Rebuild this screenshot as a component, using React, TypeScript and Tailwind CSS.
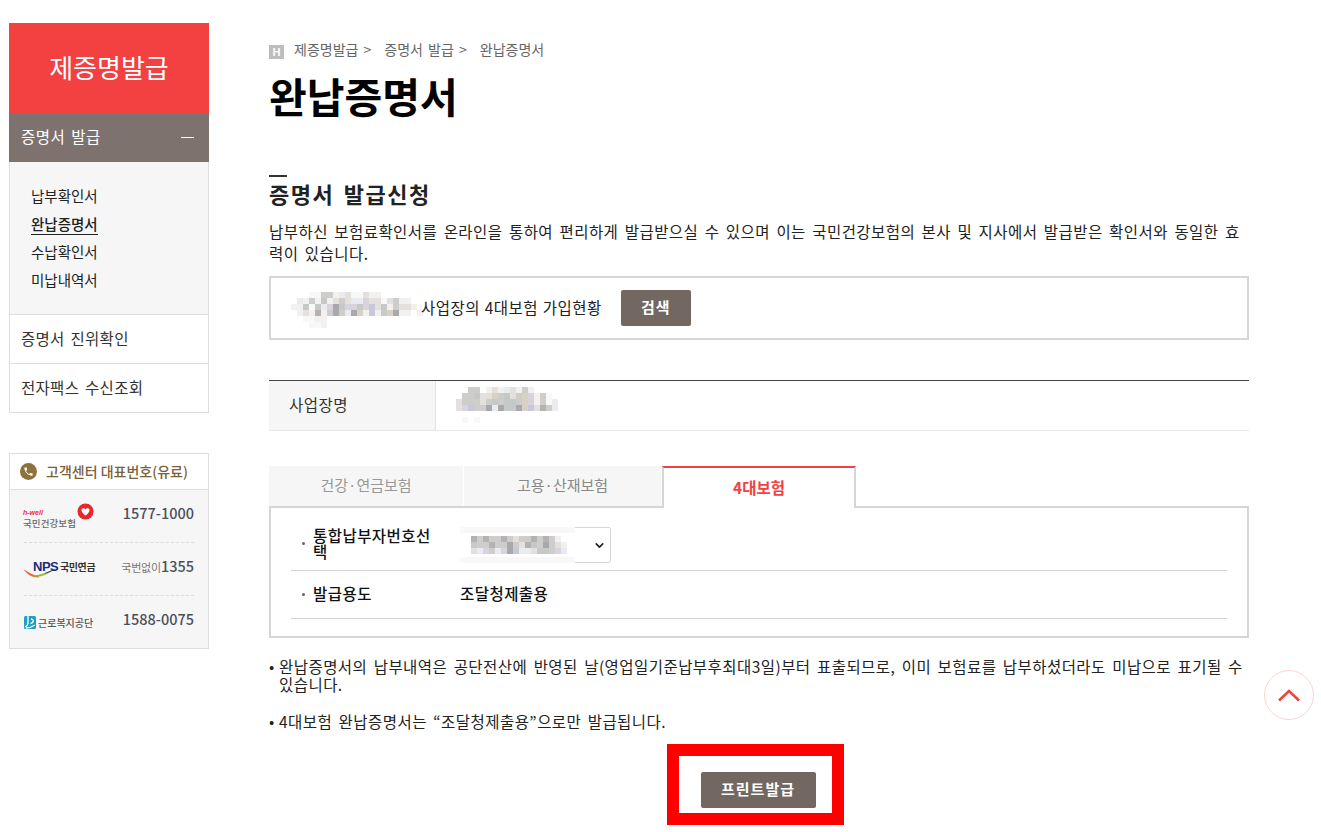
import React from "react";
import { ChevronDown } from "lucide-react";

// pixelated patch standing in for the blurred-out values
function Mosaic({ rows, cell = 6, className = "" }: { rows: string[][]; cell?: number; className?: string }) {
    const w = Math.max(...rows.map(r => r.length)) * cell;
    return (
        <svg width={w} height={rows.length * cell} className={className}>
            {rows.map((r, y) =>
                r.map((c, x) => (c ? <rect key={`${x}-${y}`} x={x * cell} y={y * cell} width={cell} height={cell} fill={c} /> : null))
            )}
        </svg>
    );
}

const a = "#f3f1ef", b = "#e3e0de", c = "#cfcdcb", d = "#b5b3b2", e = "#e9ebf0", f = "#d9d3dd", g = "#c5c9c8", h = "#d8d2c4", i = "#c8c8dc", j = "#a9a9ad", k = "#f8f8f8";

const nameRows = [
    ["", "", "", k, k, c, c, a, e, b, k, k, b, a, a, "", "", "", "", "", "", "", ""],
    ["", e, a, c, a, g, a, b, c, b, e, e, f, b, b, k, b, c, a, a, "", "", ""],
    [a, a, g, k, g, e, f, j, g, f, f, g, f, i, b, g, a, c, b, b, a, "", ""],
    ["", a, b, a, d, a, c, j, c, e, j, h, a, i, a, g, h, j, a, a, "", a, ""],
    ["", "", k, k, a, a, "", "", "", "", "", "", "", "", "", "", "", "", "", "", "", "", ""],
    ["", "", "", k, k, a, "", "", "", "", "", "", "", "", "", "", "", "", "", "", "", "", ""],
];
const bizRows = [
    ["", "", c, c, "", a, b, a, e, b, a, c, a, "", "", "", ""],
    ["", c, c, g, b, b, h, c, g, b, c, h, f, a, c, k, ""],
    [b, c, c, c, b, c, g, c, g, g, c, h, f, a, c, k, e],
    [b, f, i, c, c, j, e, j, g, g, j, h, i, b, d, c, e],
    ["", "", "", "", "", "", "", "", "", "", "", "", "", "", "", "", ""],
    ["", k, "", k, "", "", "", "", "", "", "", "", "", "", "", "", ""],
];
const selRows = [
    [d, c, d, c, c, d, c, b, c, c, d, c, d, c, a, ""],
    [g, c, c, d, c, c, j, c, b, d, g, c, j, c, b, a],
    [b, e, f, c, e, f, j, i, e, e, b, g, g, c, f, e],
];

function HealthLogo() {
    return (
        <div className="relative w-[72px] h-[30px]">
            <span className="absolute left-[-1px] top-[8px] text-[7px] leading-[7px] italic font-bold text-[#e8303a] font-['Liberation_Sans',sans-serif]">h-well</span>
            <span className="absolute left-[-1px] top-[17px] text-[9.5px] leading-[11px] tracking-[0.1px] text-[#666]">국민건강보험</span>
            <svg width="17" height="17" viewBox="0 0 17 17" className="absolute left-[53px] top-[2px]">
                <circle cx="8.5" cy="8.5" r="8" fill="#e8262d" />
                <path d="M8.5 12.5C6 10.5 4.5 9 4.5 7.2 4.5 5 7.5 4.5 8.5 6.5 9.5 4.5 12.5 5 12.5 7.2 12.5 9 11 10.5 8.5 12.5Z" fill="#fff" />
            </svg>
        </div>
    );
}

function NpsLogo() {
    return (
        <div className="relative w-[72px] h-[20px]">
            <span className="absolute left-[9px] top-[1px] text-[13px] leading-[13px] font-bold tracking-[-0.5px] text-[#1c2a7a] font-['Liberation_Sans',sans-serif]">NPS</span>
            <span className="absolute left-[36px] top-[1px] text-[10px] leading-[13px] font-bold tracking-[-0.4px] text-[#333]">국민연금</span>
            <svg width="34" height="10" viewBox="0 0 34 10" className="absolute left-0 top-[9px]">
                <path d="M0.5 2C4 7 9 9.5 15 9 10 7.5 5 5.500 0.5 2Z" fill="#e8622a" stroke="#e8622a" strokeWidth="0.6" />
                <path d="M9 8C16 9 22 7 27 3 22 5 16 7.5 9 8Z" fill="#8fb52a" stroke="#8fb52a" strokeWidth="0.6" />
                <path d="M20 5.5C24 5 28 3.5 32 0.5 28 2 24 4 20 5.5Z" fill="#1c2a7a" />
            </svg>
        </div>
    );
}

function WorkLogo() {
    return (
        <div className="flex items-center gap-[2px] h-[16px]">
            <svg width="12" height="13" viewBox="0 0 12 13">
                <rect width="12" height="13" rx="1.5" fill="#1e9fc4" />
                <path d="M4 0V7C4 9 3 10 1 11M7 3C10 3 10 7 6.5 7.5M2 12C5 12 8 11 11 9" stroke="#fff" strokeWidth="1.3" fill="none" />
            </svg>
            <span className="text-[10px] leading-[13px] text-[#555]">근로복지공단</span>
        </div>
    );
}

export default function App() {
    return (
        <div className="relative h-[832px] overflow-hidden bg-white font-['Noto_Sans_CJK_KR','Noto_Sans',sans-serif] text-[14px] text-[#111]">
            <div className="flex items-start pl-[9px] pt-[23px]">
                {/* left nav */}
                <aside className="w-[200px] shrink-0">
                    <div className="h-[91px] bg-[#f34141] flex items-center justify-center pb-[3px] text-[26px] leading-[30px] text-white">제증명발급</div>
                    <div className="h-[48px] bg-[#7e726f] flex items-center justify-between pl-[12px] pr-[15px] pb-[2px] text-[15.5px] tracking-[0.5px] [word-spacing:2px] text-white">
                        <span>증명서 발급</span>
                        <span className="block w-[13px] h-[1px] bg-white" />
                    </div>
                    <div className="border-x border-b border-[#dedede]">
                        <ul className="h-[153px] bg-[#f6f6f6] border-b border-[#dedede] pt-[20px] pl-[21px] text-[14.5px] leading-[28px] text-[#222]">
                            <li>납부확인서</li>
                            <li><span className="border-b border-[#222] font-medium">완납증명서</span></li>
                            <li>수납확인서</li>
                            <li>미납내역서</li>
                        </ul>
                        <div className="h-[49px] border-b border-[#dedede] flex items-center pl-[11px] text-[15.5px] tracking-[0.3px] [word-spacing:2px] text-[#333]">증명서 진위확인</div>
                        <div className="h-[48px] flex items-center pl-[11px] text-[15.5px] tracking-[0.3px] [word-spacing:2px] text-[#333]">전자팩스 수신조회</div>
                    </div>

                    <div className="mt-[40px] border border-[#dedede] bg-[#f6f6f6]">
                        <div className="h-[36px] bg-white border-b border-[#dedede] flex items-center pl-[10px] gap-[9px] text-[14px] font-medium text-[#7a6238]">
                            <span className="w-[17px] h-[17px] rounded-full bg-[#8f713a] flex items-center justify-center">
                                <svg width="11" height="11" viewBox="0 0 24 24" fill="#fff">
                                    <path d="M6.6 10.8c1.4 2.8 3.8 5.100 6.600 6.600l2.200-2.200c.3-.3.7-.4 1-.2 1.100.4 2.300.6 3.600.6.600 0 1 .4 1 1V20c0 .6-.4 1-1 1C10.600 21 3 13.400 3 4c0-.6.4-1 1-1h3.500c.6 0 1 .4 1 1 0 1.300.2 2.500.6 3.600.1.300 0 .7-.2 1l-2.300 2.200z" />
                                </svg>
                            </span>
                            고객센터 대표번호(유료)
                        </div>
                        <div className="px-[14px]">
                            <div className="h-[53px] border-b border-dashed border-[#dcdcdc] flex items-center justify-between text-[14.5px] font-medium text-[#4a4f5c]">
                                <HealthLogo />
                                <span className="mb-[6px]">1577-1000</span>
                            </div>
                            <div className="h-[53px] border-b border-dashed border-[#dcdcdc] flex items-center justify-between text-[14.5px] font-medium text-[#4a4f5c]">
                                <NpsLogo />
                                <span className="flex items-baseline mb-[6px]">
                                    <span className="text-[11px] font-normal tracking-[-0.2px] text-[#777]">국번없이</span>1355
                                </span>
                            </div>
                            <div className="h-[52px] flex items-center justify-between text-[14.5px] font-medium text-[#4a4f5c]">
                                <WorkLogo />
                                <span className="mb-[6px]">1588-0075</span>
                            </div>
                        </div>
                    </div>
                </aside>

                {/* content */}
                <main className="ml-[60px] w-[980px] shrink-0">
                    <div className="flex items-center h-[20px] mt-[16px] text-[14px] [word-spacing:2px] text-[#666]">
                        <span className="w-[15px] h-[14px] mt-[5px] bg-[#bdbdbd] flex items-center justify-center text-[11px] leading-[14px] font-bold text-white font-['Liberation_Sans',sans-serif]">H</span>
                        <span className="ml-[10px]">제증명발급 &gt;</span>
                        <span className="ml-[13px]">증명서 발급 &gt;</span>
                        <span className="ml-[13px]">완납증명서</span>
                    </div>
                    <h1 className="mt-[7px] h-[58px] text-[41px] leading-[58px] font-bold text-black">완납증명서</h1>

                    <div className="mt-[51px] w-[18px] h-[1.5px] bg-[#333]" />
                    <h2 className="-mt-[2px] h-[37px] text-[22px] leading-[37px] font-bold text-[#222] tracking-[1.5px] [word-spacing:3px]">증명서 발급신청</h2>
                    <p className="mt-[8px] text-[15.5px] leading-[22px] text-[#222] tracking-[0.45px] [word-spacing:2.5px]">
                        납부하신 보험료확인서를 온라인을 통하여 편리하게 발급받으실 수 있으며 이는 국민건강보험의 본사 및 지사에서 발급받은 확인서와 동일한 효력이 있습니다.
                    </p>

                    <div className="mt-[12px] h-[64px] border-2 border-[#d6d6d6] flex items-center pl-[20px]">
                        <Mosaic rows={nameRows} className="mt-[4px]" />
                        <span className="-ml-[8px] text-[15.5px] tracking-[0.45px] [word-spacing:1px] text-[#222]">사업장의 4대보험 가입현황</span>
                        <button className="ml-[19px] w-[70px] h-[36px] rounded-[2px] bg-[#736762] text-white text-[15px] tracking-[1px] font-bold">검색</button>
                    </div>

                    <div className="mt-[40px] border-t border-[#444] flex h-[51px]">
                        <div className="w-[167px] bg-[#f6f6f6] border-r border-b border-r-[#e4e4e4] border-b-[#e8e8e8] flex items-center pl-[20px] text-[15.5px] tracking-[0.45px] text-[#333]">사업장명</div>
                        <div className="flex-1 border-b border-[#e8e8e8] flex items-center pl-[20px]">
                            <Mosaic rows={bizRows} />
                        </div>
                    </div>

                    <div className="mt-[35px] flex h-[41px] relative z-10">
                        <div className="w-[194px] h-[40px] bg-[#f6f6f6] flex items-center justify-center text-[15px] text-[#999]">건강·연금보험</div>
                        <div className="ml-[1px] w-[197px] h-[40px] bg-[#f6f6f6] flex items-center justify-center text-[15px] text-[#888]">고용·산재보험</div>
                        <div className="ml-[1px] w-[194px] h-[42px] bg-white border-x-2 border-[#d6d6d6] border-t-2 border-t-[#f34141] flex items-center justify-center text-[15.5px] font-bold text-[#f34141]">4대보험</div>
                    </div>

                    <div className="-mt-[1px] h-[132px] border-2 border-[#d6d6d6] px-[20px]">
                        <div className="mt-[11px] h-[52px] border-b border-[#d6d6d6] flex items-center pb-[2px]">
                            <span className="w-[3px] h-[3px] ml-[11px] mr-[8px] rounded-full bg-[#666] shrink-0" />
                            <span className="w-[125px] shrink-0 text-[15.5px] leading-[16px] tracking-[0.45px] font-medium text-[#111] break-all">통합납부자번호선택</span>
                            <div className="ml-[22px] mt-[4px] relative w-[151px] h-[36px] rounded-[2px] border border-[#d6d6d6] flex items-center justify-end pr-[2px]">
                                <ChevronDown size={13} strokeWidth={3} className="text-[#222] mr-[2px]" />
                                <div className="absolute left-[-1px] top-[-1px] w-[115px] h-[36px] bg-[#f8f8f8] flex items-center justify-center">
                                    <div className="w-[115px] h-[24px] bg-white flex items-center pl-[11px]">
                                        <Mosaic rows={selRows} cell={6} />
                                    </div>
                                </div>
                            </div>
                        </div>
                        <div className="h-[48px] border-b border-[#d6d6d6] flex items-center">
                            <span className="w-[3px] h-[3px] ml-[11px] mr-[8px] rounded-full bg-[#666] shrink-0" />
                            <span className="w-[147px] shrink-0 text-[15.5px] tracking-[0.45px] font-medium text-[#111]">발급용도</span>
                            <span className="text-[15.5px] tracking-[0.45px] font-medium text-[#111]">조달청제출용</span>
                        </div>
                    </div>

                    <div className="mt-[19px] flex text-[15.5px] leading-[18px] tracking-[0.45px] [word-spacing:2.5px] text-[#222]">
                        <span className="w-[10px] shrink-0">•</span>
                        <p>완납증명서의 납부내역은 공단전산에 반영된 날(영업일기준납부후최대3일)부터 표출되므로, 이미 보험료를 납부하셨더라도 미납으로 표기될 수 있습니다.</p>
                    </div>
                    <div className="mt-[19px] flex text-[15.5px] leading-[18px] tracking-[0.45px] [word-spacing:2.5px] text-[#222]">
                        <span className="w-[10px] shrink-0">•</span>
                        <p>4대보험 완납증명서는 “조달청제출용”으로만 발급됩니다.</p>
                    </div>

                    <div className="mt-[42px] flex justify-center pr-[2px]">
                        <button className="w-[115px] h-[36px] rounded-[2px] bg-[#736762] text-white text-[15px] tracking-[1px] font-bold">프린트발급</button>
                    </div>
                </main>
            </div>

            {/* annotation frame round the print button */}
            <div className="absolute left-[667px] top-[744px] w-[177px] h-[81px] border-[12px] border-[#ff0000] pointer-events-none" />

            {/* back to top */}
            <button className="absolute left-[1264px] top-[670px] w-[50px] h-[50px] rounded-full bg-white border border-[#fcd4d4] flex items-center justify-center">
                <svg width="22" height="13" viewBox="0 0 22 13" fill="none" stroke="#f34141" strokeWidth="2.6">
                    <path d="M1 11.500L11 2l10 9.500" />
                </svg>
            </button>
        </div>
    );
}
